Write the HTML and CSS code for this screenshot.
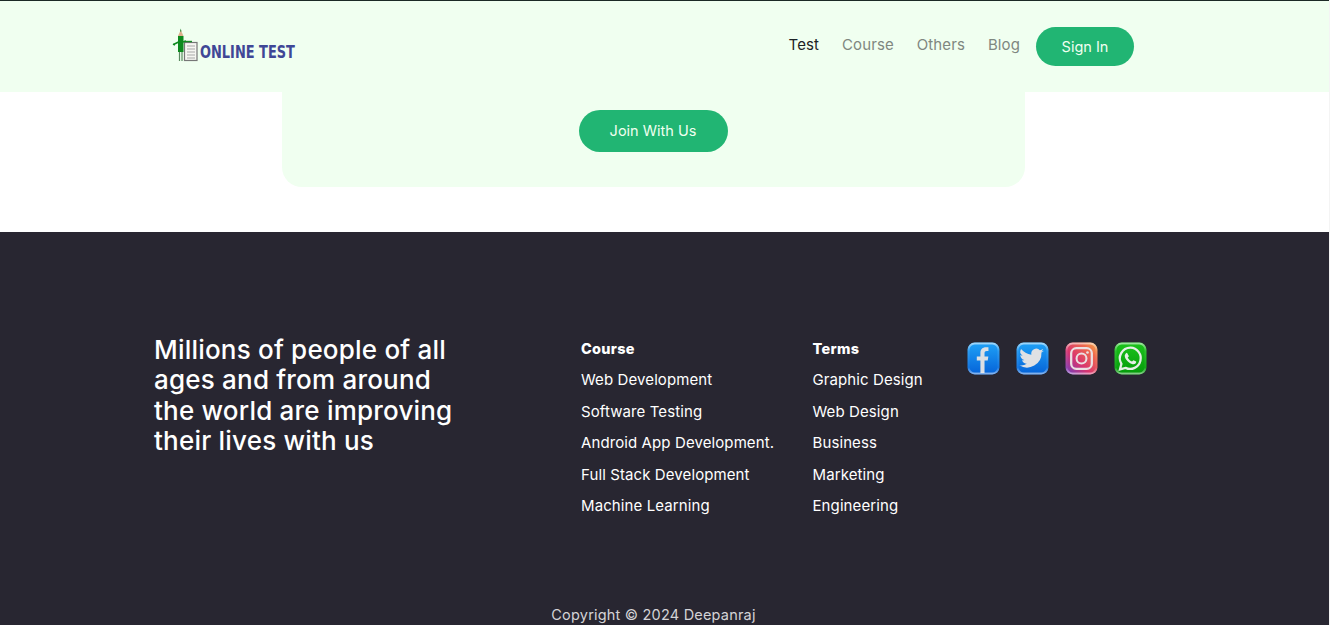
FILE: index.html
```html
<!DOCTYPE html>
<html lang="en">
<head>
<meta charset="utf-8">
<title>Online Test</title>
<link rel="stylesheet" href="styles.css">
</head>
<body>
<div class="page">
  <header class="topbar">
    <div class="topbar-inner">
      <a class="logo" href="#">
        <svg class="logo-mark" width="28" height="36" viewBox="0 0 28 36">
          <rect x="12.500" y="15.500" width="12.500" height="18" fill="#f6f6f2" stroke="#777" stroke-width="1.200"/>
          <path d="M12 14.500h8" stroke="#1c8a2a" stroke-width="1.400"/>
          <path d="M15 19h8M15 22h8M15 25h8M15 28h8M15 31h8" stroke="#a8a8a8" stroke-width="1"/>
          <path d="M6 9h5.500v16H6z" fill="#0d8a1e"/>
          <path d="M6 9l2.700-6 2.800 6z" fill="#dcae8c"/>
          <path d="M8 4.500L8.700 1.500l.8 3z" fill="#1c7a2a"/>
          <path d="M6.500 15L1.500 17.500M1 17l2 1M11 15l3-1" stroke="#0d8a1e" stroke-width="1.500" fill="none"/>
          <path d="M7.500 25v9M10 25v9" stroke="#5a8a60" stroke-width="1.200"/>
        </svg>
        <span class="logo-text">ONLINE TEST</span>
      </a>
      <nav class="nav">
        <a class="nav-link active" href="#">Test</a>
        <a class="nav-link" href="#">Course</a>
        <a class="nav-link" href="#">Others</a>
        <a class="nav-link" href="#">Blog</a>
        <a class="btn btn-signin" href="#">Sign In</a>
      </nav>
    </div>
  </header>
  <section class="cta-wrap">
    <div class="cta"><a class="btn btn-join" href="#">Join With Us</a></div>
  </section>
  <footer class="footer">
    <div class="footer-main">
      <h2 class="tagline">Millions of people of all ages and from around the world are improving their lives with us</h2>
      <div class="col col-course">
        <h3>Course</h3>
        <a href="#">Web Development</a>
        <a href="#">Software Testing</a>
        <a href="#">Android App Development.</a>
        <a href="#">Full Stack Development</a>
        <a href="#">Machine Learning</a>
      </div>
      <div class="col col-terms">
        <h3>Terms</h3>
        <a href="#">Graphic Design</a>
        <a href="#">Web Design</a>
        <a href="#">Business</a>
        <a href="#">Marketing</a>
        <a href="#">Engineering</a>
      </div>
      <div class="social">
        <svg class="icon" viewBox="0 0 32 32">
          <defs>
            <linearGradient id="b" x1="0" y1="0" x2="0" y2="1"><stop offset="0" stop-color="#1fa2f7"/><stop offset="1" stop-color="#0562d8"/></linearGradient>
            <linearGradient id="gl" x1="0" y1="0" x2="0" y2="1"><stop offset="0" stop-color="#fff" stop-opacity=".55"/><stop offset=".25" stop-color="#fff" stop-opacity=".1"/><stop offset=".8" stop-color="#fff" stop-opacity=".05"/><stop offset="1" stop-color="#fff" stop-opacity=".5"/></linearGradient>
          </defs>
          <rect x="0.500" y="0.500" width="31" height="31" rx="7" fill="url(#b)"/>
          <path d="M13 30V18H9.500v-4H13v-3.500C13 7 15.200 5 18.300 5c1.100 0 2 .1 2.500.2v3.600h-1.700c-1.500 0-2.100.8-2.100 2V14h3.700l-.6 4h-3.100v12z" fill="#dcdfe3"/>
          <rect x="1.500" y="1.500" width="29" height="29" rx="6" fill="none" stroke="url(#gl)" stroke-width="2"/>
        </svg>
        <svg class="icon" viewBox="0 0 32 32">
          <rect x="0.500" y="0.500" width="31" height="31" rx="7" fill="url(#b)"/>
          <path d="M27 8.500c-.9.400-1.800.7-2.800.8 1-.6 1.800-1.500 2.100-2.600-.9.600-2 1-3.100 1.200a4.900 4.900 0 0 0-8.300 4.400C10.900 11.600 7.300 9.700 4.900 6.700a4.900 4.900 0 0 0 1.500 6.500c-.8 0-1.500-.2-2.200-.6 0 2.400 1.700 4.400 3.900 4.900-.7.200-1.500.2-2.200.1.600 2 2.400 3.400 4.600 3.400A9.900 9.900 0 0 1 3.200 22.500a14 14 0 0 0 21.500-12.400c1-.4 1.700-1 2.300-1.600z" fill="#dfe1e4"/>
          <rect x="1.500" y="1.500" width="29" height="29" rx="6" fill="none" stroke="url(#gl)" stroke-width="2"/>
        </svg>
        <svg class="icon" viewBox="0 0 32 32">
          <defs><linearGradient id="g" x1="0" y1="1" x2="1" y2="0"><stop offset="0" stop-color="#6a3fc4"/><stop offset="0.400" stop-color="#d8346f"/><stop offset="0.750" stop-color="#ee6a4c"/><stop offset="1" stop-color="#f7b04a"/></linearGradient></defs>
          <rect x="0.500" y="0.500" width="31" height="31" rx="7" fill="url(#g)"/>
          <rect x="6" y="6" width="20" height="20" rx="5" fill="none" stroke="#ebe0e2" stroke-width="2.200"/>
          <circle cx="16" cy="16" r="4.800" fill="none" stroke="#ebe0e2" stroke-width="2"/>
          <circle cx="21.800" cy="10.200" r="1.300" fill="#ebe0e2"/>
          <rect x="1.500" y="1.500" width="29" height="29" rx="6" fill="none" stroke="url(#gl)" stroke-width="2"/>
        </svg>
        <svg class="icon" viewBox="0 0 32 32">
          <defs><linearGradient id="w" x1="0" y1="0" x2="0" y2="1"><stop offset="0" stop-color="#1cc41c"/><stop offset="1" stop-color="#049a0a"/></linearGradient></defs>
          <rect x="0.500" y="0.500" width="31" height="31" rx="7" fill="url(#w)"/>
          <path d="M16 5.500a10.300 10.300 0 0 0-8.800 15.700L5.800 26.500l5.400-1.400A10.300 10.300 0 1 0 16 5.500z" fill="none" stroke="#e6efe6" stroke-width="2.200"/>
          <path d="M12.600 10.500c-.4 0-1 .2-1.400.8-.6.800-.9 1.700-.7 2.800.4 2.900 4.300 6.900 7.600 7.500 1.200.2 2.300-.2 3-1 .4-.5.500-1.100.4-1.600l-2.700-1.300-1.300 1.300c-1.600-.5-3.500-2.300-4.200-4l1.200-1.300z" fill="#e6efe6"/>
          <rect x="1.500" y="1.500" width="29" height="29" rx="6" fill="none" stroke="url(#gl)" stroke-width="2"/>
        </svg>
      </div>
    </div>
    <p class="copyright">Copyright © 2024 Deepanraj</p>
  </footer>
</div>
</body>
</html>
```
FILE: styles.css
```css
* { box-sizing: border-box; }
html, body { margin: 0; padding: 0; height: 625px; overflow: hidden; background: #f4f4f4; }
body { font-family: "Inter", "Liberation Sans", sans-serif; }
a { text-decoration: none; color: inherit; }
.page { width: 1329px; height: 625px; overflow: hidden; border-top: 1px solid #1c2a26; background: #fff; }
.topbar { height: 91px; background: #f0fff0; }
.topbar-inner { width: 1022px; margin-left: 154px; height: 100%; display: flex; justify-content: space-between; align-items: center; padding-left: 18px; padding-right: 42px; }
.logo { display: flex; align-items: center; margin-top: -4px; }
.logo-text { display: inline-block; font-family: "DejaVu Sans", "Liberation Sans", sans-serif; font-weight: 700; font-size: 17.500px; color: #3f4796; margin-top: 15px; white-space: nowrap; transform: scaleX(0.74); transform-origin: left center; }
.nav { display: flex; align-items: center; gap: 23px; }
.nav-link { font-size: 15px; letter-spacing: 0.1px; color: #7f8780; position: relative; top: -2px; }
.nav-link.active { color: #1c2226; }
.btn { background: #21b573; color: #f0fff0; font-size: 14.500px; display: flex; align-items: center; justify-content: center; border-radius: 21px; }
.btn-signin { width: 98px; height: 39px; margin-left: -7px; }
.cta-wrap { height: 140px; display: flex; padding-left: 282px; }
.cta { width: 743px; height: 95px; background: #f0fff0; border-radius: 0 0 20px 20px; display: flex; justify-content: center; padding-top: 18px; }
.btn-join { width: 149px; height: 42px; padding-bottom: 2px; margin-left: -1px; }
.footer { background: #282631; height: 393px; color: #fff; padding-top: 103px; }
.footer-main { display: flex; align-items: flex-start; padding-left: 154px; }
.tagline { margin: 0; width: 427px; padding-right: 115px; font-size: 26px; letter-spacing: 0.2px; line-height: 30.300px; font-weight: 500; color: #fff; }
.col { display: flex; flex-direction: column; font-size: 15px; letter-spacing: 0.1px; }
.col h3 { margin: 3px 0 4px; font-size: 14.500px; letter-spacing: 0.3px; line-height: 22px; font-weight: 800; }
.col a { line-height: 31.500px; white-space: nowrap; }
.col-course { width: 231.500px; }
.col-terms { width: 154.500px; }
.social { display: flex; gap: 16px; padding-top: 7px; }
.icon { width: 33px; height: 33px; display: block; }
.copyright { margin: 0; padding-top: 84px; text-align: center; width: 1307px; font-size: 14.500px; letter-spacing: 0.2px; color: #d4d3d6; }
```
